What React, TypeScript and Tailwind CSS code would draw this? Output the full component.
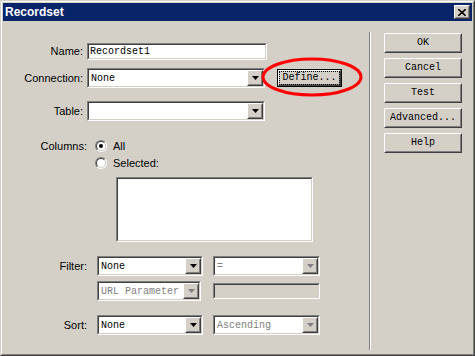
import * as React from 'react';

const mono = "font-['Liberation_Mono','DejaVu_Sans_Mono',monospace] text-[10px]";

function Sunken({ className = '', inner = 'bg-white', children }: { className?: string; inner?: string; children?: React.ReactNode }) {
  return (
    <div className={`border border-t-[#808080] border-l-[#808080] border-b-white border-r-white ${className}`}>
      <div className={`w-full h-full border border-t-[#404040] border-l-[#404040] border-b-[#d4d0c8] border-r-[#d4d0c8] ${inner}`}>
        {children}
      </div>
    </div>
  );
}

function Raised({ className = '', children }: { className?: string; children?: React.ReactNode }) {
  return (
    <div className={`border border-t-white border-l-white border-b-[#404040] border-r-[#404040] bg-[#d4d0c8] ${className}`}>
      <div className="w-full h-full border border-t-[#d4d0c8] border-l-[#d4d0c8] border-b-[#808080] border-r-[#808080] flex items-center justify-center">
        {children}
      </div>
    </div>
  );
}

function Arrow({ disabled }: { disabled?: boolean }) {
  return (
    <Raised className="w-[16px] h-[16px] shrink-0">
      <svg width="7" height="4" viewBox="0 0 7 4">
        <path d="M0 0h7L3.5 4z" fill={disabled ? '#808080' : '#000'} />
      </svg>
    </Raised>
  );
}

function Select({ value, width, muted, arrowOff }: { value: string; width: string; muted?: boolean; arrowOff?: boolean }) {
  return (
    <Sunken className={`${width} h-[20px]`}>
      <div className="flex h-full">
        <div className={`flex-1 flex items-center pl-[2px] ${mono} ${muted ? 'text-[#808080]' : 'text-black'}`}>{value}</div>
        <Arrow disabled={arrowOff} />
      </div>
    </Sunken>
  );
}

function Radio({ checked }: { checked?: boolean }) {
  return (
    <div className="w-[12px] h-[12px] rounded-full border border-t-[#808080] border-l-[#808080] border-b-white border-r-white">
      <div className="w-full h-full rounded-full border border-t-[#404040] border-l-[#404040] border-b-[#d4d0c8] border-r-[#d4d0c8] bg-white flex items-center justify-center">
        {checked && <div className="w-[4px] h-[4px] rounded-full bg-black" />}
      </div>
    </div>
  );
}

const label = "text-[11px] text-black text-right leading-none";

export default function App() {
  const buttons = ['OK', 'Cancel', 'Test', 'Advanced...', 'Help'];
  return (
    <div className="w-[475px] h-[356px] font-['Liberation_Sans',Arial,sans-serif] border border-t-[#d4d0c8] border-l-[#d4d0c8] border-b-[#404040] border-r-[#404040]">
      <div className="w-full h-full border border-t-white border-l-white border-b-[#808080] border-r-[#808080] bg-[#d4d0c8] p-px flex flex-col relative">
        <div className="h-[18px] bg-[#0a246a] flex items-center justify-between pl-[2px] pr-[2px]">
          <span className="text-white font-bold text-[12px] leading-none">Recordset</span>
          <Raised className="w-[16px] h-[14px]">
            <svg width="8" height="7" viewBox="0 0 8 7">
              <path d="M0 0L8 7M8 0L0 7" stroke="#000" strokeWidth="1.6" />
            </svg>
          </Raised>
        </div>

        <div className="flex flex-1">
          <div className="w-[366px] shrink-0 flex flex-col">
            <div className="mt-[22px] flex items-center h-[17px]">
              <div className={`w-[80px] ${label}`}>Name:</div>
              <Sunken className="ml-[4px] w-[180px] h-[17px]">
                <div className={`h-full flex items-center pl-[1px] ${mono}`}>Recordset1</div>
              </Sunken>
            </div>

            <div className="mt-[8px] flex items-center h-[20px] relative">
              <div className={`w-[80px] ${label}`}>Connection:</div>
              <div className="ml-[4px]">
                <Select value="None" width="w-[178px]" />
              </div>
              <div className="ml-[12px] w-[65px] h-[18px] border border-black">
                <Raised className="w-full h-full">
                  <span className={`${mono} leading-none px-[2px] py-px outline outline-1 outline-dotted outline-black`}>Define...</span>
                </Raised>
              </div>
              <svg className="absolute left-[258px] top-[-11px]" width="102" height="40" viewBox="0 0 102 40">
                <ellipse cx="51" cy="20" rx="49" ry="18" fill="none" stroke="#ff0000" strokeWidth="3" />
              </svg>
            </div>

            <div className="mt-[13px] flex items-center h-[20px]">
              <div className={`w-[80px] ${label}`}>Table:</div>
              <div className="ml-[4px]">
                <Select value="" width="w-[178px]" />
              </div>
            </div>

            <div className="mt-[19px] flex items-center h-[12px]">
              <div className={`w-[84px] ${label}`}>Columns:</div>
              <div className="ml-[8px]"><Radio checked /></div>
              <div className="ml-[6px] text-[11px] leading-none">All</div>
            </div>
            <div className="mt-[5px] flex items-center h-[12px]">
              <div className="w-[84px]" />
              <div className="ml-[8px]"><Radio /></div>
              <div className="ml-[6px] text-[11px] leading-none">Selected:</div>
            </div>

            <Sunken className="mt-[8px] ml-[113px] w-[197px] h-[65px]" />

            <div className="mt-[14px] flex items-center h-[20px]">
              <div className={`w-[84px] ${label}`}>Filter:</div>
              <div className="ml-[10px]"><Select value="None" width="w-[106px]" /></div>
              <div className="ml-[10px]"><Select value="=" width="w-[107px]" muted arrowOff /></div>
            </div>
            <div className="mt-[5px] flex items-center h-[20px]">
              <div className="w-[84px]" />
              <div className="ml-[10px]"><Select value="URL Parameter" width="w-[104px]" muted arrowOff /></div>
              <Sunken className="ml-[12px] w-[107px] h-[16px]" inner="bg-[#d4d0c8]" />
            </div>
            <div className="mt-[14px] flex items-center h-[20px]">
              <div className={`w-[84px] ${label}`}>Sort:</div>
              <div className="ml-[10px]"><Select value="None" width="w-[106px]" /></div>
              <div className="ml-[10px]"><Select value="Ascending" width="w-[107px]" muted arrowOff /></div>
            </div>
          </div>

          <div className="mt-[11px] h-[318px] w-[2px] flex shrink-0">
            <div className="w-px h-full bg-[#808080]" />
            <div className="w-px h-full bg-white" />
          </div>

          <div className="ml-[13px] mt-[12px] flex flex-col gap-[5px]">
            {buttons.map((b) => (
              <Raised key={b} className="w-[78px] h-[20px]">
                <span className={`${mono} leading-none text-black`}>{b}</span>
              </Raised>
            ))}
          </div>
        </div>
      </div>
    </div>
  );
}
